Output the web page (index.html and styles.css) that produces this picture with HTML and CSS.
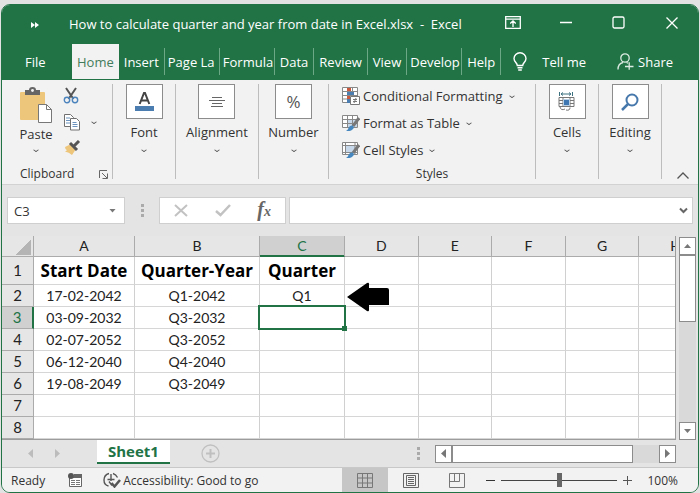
FILE: index.html
```html
<!DOCTYPE html>
<html lang="en">
<head>
    <meta charset="UTF-8">
    <title>Excel</title>
    <link rel="stylesheet" href="styles.css">
</head>
<body>
    <div class="window">
        <header class="title-bar">
            <button class="quick-access" aria-label="Quick access">
                <svg width="8" height="6" viewBox="0 0 8 6"><path d="M0 0l4 3-4 3zM4 0l4 3-4 3z" fill="#fff"/></svg>
            </button>
            <h1>How to calculate quarter and year from date in Excel.xlsx&nbsp; -&nbsp; Excel</h1>
            <div class="window-buttons">
                <button aria-label="Ribbon display options">
                    <svg width="16" height="13" viewBox="0 0 16 13" fill="none" stroke="#fff" stroke-width="1.3"><path d="M.7.7h14.6v11.6H.7zM.7 3.2h14.6M8 11V5M5.2 7.6L8 5l2.8 2.6"/></svg>
                </button>
                <button aria-label="Minimize">
                    <svg width="12" height="12" viewBox="0 0 12 12"><path d="M0 5.5h12" stroke="#fff" stroke-width="1.3"/></svg>
                </button>
                <button aria-label="Maximize">
                    <svg width="13" height="13" viewBox="0 0 13 13"><rect x="1" y="1" width="11" height="11" rx="1.5" fill="none" stroke="#fff" stroke-width="1.3"/></svg>
                </button>
                <button aria-label="Close">
                    <svg width="12" height="12" viewBox="0 0 12 12"><path d="M.5.5l11 11M11.5.5l-11 11" stroke="#fff" stroke-width="1.3"/></svg>
                </button>
            </div>
        </header>

        <nav class="tabs">
            <button class="tab tab-file">File</button>
            <button class="tab active">Home</button>
            <button class="tab">Insert</button>
            <button class="tab tab-wide">Page La</button>
            <button class="tab tab-wide">Formula</button>
            <button class="tab">Data</button>
            <button class="tab">Review</button>
            <button class="tab">View</button>
            <button class="tab tab-wide">Develop</button>
            <button class="tab">Help</button>
            <button class="tell-me">
                <svg width="14" height="19" viewBox="0 0 14 19" fill="none" stroke="#fff" stroke-width="1.4"><path d="M4.3 13.5c0-2.6-3.3-3.6-3.3-7a6 5.8 0 0 1 12 0c0 3.4-3.3 4.4-3.3 7zM4.5 15.8h5M5.2 18h3.6"/></svg>
                Tell me
            </button>
            <button class="share">
                <svg width="17" height="17" viewBox="0 0 17 17" fill="none" stroke="#dcebe2" stroke-width="1.3"><circle cx="8" cy="5" r="4.2"/><path d="M1 16.5c0-4 2-6.3 5-7M9.5 9.5l1.5.8M8 13.5h8.5M12.2 9.3v7.5"/></svg>
                Share
            </button>
        </nav>

        <section class="ribbon">
            <div class="group group-clipboard">
                <div class="clipboard-tools">
                    <button class="big-button paste">
                        <svg width="34" height="36" viewBox="0 0 34 36">
                            <rect x="1" y="5" width="25" height="28" rx="1" fill="#edc57b"/>
                            <path d="M6 8V3h4a3.5 3 0 0 1 7 0h4v5z" fill="#666"/><circle cx="13.5" cy="3.5" r="1.4" fill="#f3f3f3"/>
                            <path d="M19.500 17.500h8l5 5v13h-13z" fill="#fff" stroke="#777"/><path d="M27.500 17.500v5h5" fill="none" stroke="#777"/>
                        </svg>
                        <span>Paste</span>
                        <i class="chevron"></i>
                    </button>
                    <div class="small-tools">
                        <button aria-label="Cut">
                            <svg width="16" height="17" viewBox="0 0 16 17" fill="none"><path d="M3 1l7.500 11M13 1L5.500 12" stroke="#555" stroke-width="2"/><circle cx="4" cy="13" r="2.7" stroke="#4c84bd" stroke-width="1.4"/><circle cx="12" cy="13" r="2.7" stroke="#4c84bd" stroke-width="1.4"/></svg>
                        </button>
                        <button class="copy" aria-label="Copy">
                            <svg width="18" height="18" viewBox="0 0 18 18" fill="#fff" stroke="#707070"><path d="M1.500 1.500h6l3 3v9h-9z"/><path d="M3 5h4M3 7.500h4M3 10h4" stroke="#6b93bd"/><path d="M7.500 5.500h6l3 3v8.500h-9z"/><path d="M9.500 9.500h4M9.500 11.500h5M9.500 13.500h5" stroke="#6b93bd"/></svg>
                            <i class="chevron"></i>
                        </button>
                        <button aria-label="Format painter">
                            <svg width="18" height="15" viewBox="0 0 18 15"><path d="M2 7l6-3 5 5-4 6q-3-3-7-3.500l2-1.200q-2-1-2-3.300z" fill="#edc57b"/><path d="M7 3l7 7M10.500 6.500L16 1" stroke="#555" stroke-width="3"/></svg>
                        </button>
                    </div>
                </div>
                <div class="group-name">
                    Clipboard
                    <button aria-label="Clipboard settings">
                        <svg width="9" height="9" viewBox="0 0 9 9" fill="none" stroke="#666"><path d="M.5 8V.5H8M3 3l5 5M8.500 3.500v5h-5"/></svg>
                    </button>
                </div>
            </div>
            <div class="group">
                <button class="big-button">
                    <span class="icon-box">
                        <svg width="19" height="20" viewBox="0 0 19 20"><path d="M4.700 12L9 1h1l4.300 11M6.500 8.500h6" fill="none" stroke="#444" stroke-width="2"/><rect y="14" width="19" height="5" fill="#4c7db1"/></svg>
                    </span>
                    <span>Font</span>
                    <i class="chevron"></i>
                </button>
            </div>
            <div class="group group-alignment">
                <button class="big-button">
                    <span class="icon-box">
                        <svg width="16" height="12" viewBox="0 0 16 12" stroke="#666"><path d="M3 1.500h10M0 4.500h16M3 7.500h10M2 10.500h12"/></svg>
                    </span>
                    <span>Alignment</span>
                    <i class="chevron"></i>
                </button>
            </div>
            <div class="group group-number">
                <button class="big-button">
                    <span class="icon-box percent">%</span>
                    <span>Number</span>
                    <i class="chevron"></i>
                </button>
            </div>
            <div class="group group-styles">
                <div class="style-list">
                    <button>
                        <svg width="18" height="18" viewBox="0 0 18 18"><path d="M.5.5h15v15H.5zM.5 4.500h15M.5 8.500h15M.5 12h15M5.500.5v15M10.500.5v15" fill="#fff" stroke="#888"/><path d="M5 1h4v3H5zM5 9h3v3H5z" fill="#c9573b"/><path d="M5 5h7v3H5zM5 12h4v4H5z" fill="#4c7db1"/><path d="M8.500 9.500h9v8h-9z" fill="#fff" stroke="#777"/><path d="M11 12.500h4M11 14.500h4M14 11l-2 5" stroke="#777"/></svg>
                        Conditional Formatting <i class="chevron"></i>
                    </button>
                    <button>
                        <svg width="18" height="18" viewBox="0 0 18 18"><path d="M.5 1.500h15v12H.5z" fill="#fff" stroke="#888"/><path d="M5 5h10v8H5z" fill="#c6d8e9"/><path d="M.5 5.500h15M.5 9.500h15M5.500 1.500v12M10.500 1.500v12" stroke="#888"/><path d="M17 4l-6 8" stroke="#777" stroke-width="3"/><path d="M4 17q2-1 2.500-3 1-3 4-2.500 2 1 1 3-2 3-7.500 2.500z" fill="#4587be"/></svg>
                        Format as Table <i class="chevron"></i>
                    </button>
                    <button>
                        <svg width="18" height="18" viewBox="0 0 18 18"><path d="M.5 1.500h15v12H.5z" fill="#fff" stroke="#888"/><path d="M3 5h10v6H3z" fill="#c6d8e9"/><path d="M.5 4.500h15M.5 11.500h15M3.500 1.500v12M13 1.500v12" stroke="#888"/><path d="M17 4l-6 8" stroke="#777" stroke-width="3"/><path d="M4 17q2-1 2.500-3 1-3 4-2.500 2 1 1 3-2 3-7.500 2.500z" fill="#4587be"/></svg>
                        Cell Styles <i class="chevron"></i>
                    </button>
                </div>
                <div class="group-name">Styles</div>
            </div>
            <div class="group">
                <button class="big-button">
                    <span class="icon-box">
                        <svg width="18" height="20" viewBox="0 0 18 20" fill="none" stroke="#777"><path d="M1 5.500h15v9H1zM1 8.500h15M1 11.500h15M5 5v10M12 5v10M2 15q1 4 5 2M8 18q4 1 4-2.500"/><path d="M5.500 7.500h6v6h-6z" fill="#3f77b3" stroke="#b9cfe4"/><path d="M1.500 0v4M14.500 0v4M3 2h10M5 .5L3 2l2 1.500M11 .5L13 2l-2 1.500" stroke="#3c7180"/></svg>
                    </span>
                    <span>Cells</span>
                    <i class="chevron"></i>
                </button>
            </div>
            <div class="group">
                <button class="big-button">
                    <span class="icon-box">
                        <svg width="18" height="18" viewBox="0 0 18 18" fill="none" stroke="#4778ac" stroke-width="2"><circle cx="11" cy="7" r="5.5"/><path d="M7 11l-6 6" stroke-width="2.5"/></svg>
                    </span>
                    <span>Editing</span>
                    <i class="chevron"></i>
                </button>
            </div>
            <button class="collapse" aria-label="Collapse ribbon">
                <svg width="12" height="7" viewBox="0 0 12 7"><path d="M.5 6.500L6 1l5.500 5.500" fill="none" stroke="#555" stroke-width="1.3"/></svg>
            </button>
        </section>

        <section class="formula-bar">
            <div class="name-box">
                <input type="text" value="C3" aria-label="Name box">
                <button aria-label="Choose name"><i class="triangle down"></i></button>
            </div>
            <i class="dots"></i>
            <div class="formula-buttons">
                <button aria-label="Cancel"><svg width="14" height="13" viewBox="0 0 14 13"><path d="M1 1l12 11M13 1L1 12" stroke="#c2c2c2" stroke-width="2"/></svg></button>
                <button aria-label="Enter"><svg width="16" height="13" viewBox="0 0 16 13"><path d="M1 7l4.500 4L15 1" fill="none" stroke="#c2c2c2" stroke-width="2.5"/></svg></button>
                <button class="fx" aria-label="Insert function">f<small>x</small></button>
            </div>
            <div class="formula-input">
                <input type="text" aria-label="Formula">
                <button aria-label="Expand formula bar"><svg width="9" height="7" viewBox="0 0 9 7"><path d="M1 1.500l3.500 3.500L8 1.500" fill="none" stroke="#666" stroke-width="2"/></svg></button>
            </div>
        </section>

        <main class="sheet">
            <div class="grid">
                <table>
                    <colgroup>
                        <col class="col-head"><col class="col-a"><col class="col-b"><col class="col-c">
                        <col><col><col><col><col>
                    </colgroup>
                    <thead>
                        <tr>
                            <th class="corner"></th>
                            <th>A</th><th>B</th><th class="selected">C</th><th>D</th><th>E</th><th>F</th><th>G</th><th>H</th>
                        </tr>
                    </thead>
                    <tbody>
                        <tr class="heading-row"><th>1</th><td>Start Date</td><td>Quarter-Year</td><td>Quarter</td><td></td><td></td><td></td><td></td><td></td></tr>
                        <tr>
                            <th>2</th><td>17-02-2042</td><td>Q1-2042</td><td>Q1</td>
                            <td class="pointer-cell">
                                <svg class="pointer" width="43" height="30" viewBox="0 0 43 30"><path d="M0 15L20 1q2-1 2 1v4h18q2 0 2 2v15H22v5q0 2-2 1z"/></svg>
                            </td>
                            <td></td><td></td><td></td><td></td>
                        </tr>
                        <tr><th class="selected">3</th><td>03-09-2032</td><td>Q3-2032</td><td class="current"></td><td></td><td></td><td></td><td></td><td></td></tr>
                        <tr><th>4</th><td>02-07-2052</td><td>Q3-2052</td><td></td><td></td><td></td><td></td><td></td><td></td></tr>
                        <tr><th>5</th><td>06-12-2040</td><td>Q4-2040</td><td></td><td></td><td></td><td></td><td></td><td></td></tr>
                        <tr><th>6</th><td>19-08-2049</td><td>Q3-2049</td><td></td><td></td><td></td><td></td><td></td><td></td></tr>
                        <tr><th>7</th><td></td><td></td><td></td><td></td><td></td><td></td><td></td><td></td></tr>
                        <tr><th>8</th><td></td><td></td><td></td><td></td><td></td><td></td><td></td><td></td></tr>
                    </tbody>
                </table>
            </div>
            <div class="scroll-vertical">
                <button aria-label="Scroll up"><i class="triangle up"></i></button>
                <div class="thumb"></div>
                <button class="last" aria-label="Scroll down"><i class="triangle down"></i></button>
            </div>
        </main>

        <div class="sheet-bar">
            <button class="sheet-arrow" aria-label="Previous sheet"><i class="triangle left"></i></button>
            <button class="sheet-arrow" aria-label="Next sheet"><i class="triangle right"></i></button>
            <button class="sheet-tab">Sheet1</button>
            <button class="add-sheet" aria-label="New sheet">
                <svg width="19" height="19" viewBox="0 0 19 19" fill="none" stroke="#c0c0c0" stroke-width="1.3"><circle cx="9.5" cy="9.5" r="8.5"/><path d="M9.500 5v9M5 9.500h9" stroke-width="2"/></svg>
            </button>
            <i class="dots"></i>
            <div class="scroll-horizontal">
                <button aria-label="Scroll left"><i class="triangle left"></i></button>
                <div class="thumb"></div>
                <button class="last" aria-label="Scroll right"><i class="triangle right"></i></button>
            </div>
        </div>

        <footer class="status-bar">
            <span class="ready">Ready</span>
            <svg class="macro" width="15" height="15" viewBox="0 0 15 15"><path d="M1.500 4.500h12v9h-12z" fill="#fff" stroke="#666"/><path d="M6 1h8v4H6z" fill="#666"/><circle cx="3" cy="3" r="3" fill="#555"/><path d="M3 7.500h4M8 7.500h4M3 9.500h4M8 9.500h4M3 11.500h4M8 11.500h4" stroke="#777"/></svg>
            <button class="accessibility">
                <svg width="18" height="16" viewBox="0 0 18 16" fill="none" stroke="#555" stroke-width="1.4"><path d="M6 1.500Q1 3 1 8t4.500 6M10 1.500q3 1 4.500 4"/><path d="M8 2v7M4.500 7.500h7M6 9.500l3 4"/><path d="M8.500 11l3 3.500L17 8" stroke-width="2.5"/></svg>
                Accessibility: Good to go
            </button>
            <div class="views">
                <button class="active" aria-label="Normal"><svg width="16" height="15" viewBox="0 0 16 15"><path d="M.5.5h15v14H.5zM.5 5h15M.5 10h15M5.500.5v14M10.500.5v14" fill="none" stroke="#777"/></svg></button>
                <button aria-label="Page layout"><svg width="16" height="15" viewBox="0 0 16 15" fill="none" stroke="#666"><path d="M.5.5h15v14H.5zM3.500 2.500h9v10h-9zM5 4.500h6M5 6.500h6M5 8.500h6M5 10.500h6"/></svg></button>
                <button aria-label="Page break preview"><svg width="16" height="15" viewBox="0 0 16 15" fill="none" stroke="#777"><path d="M.5.5h15v14H.5zM5.500.5v8M10.500.5v8M.5 8.500h10"/></svg></button>
            </div>
            <div class="zoom">
                <button aria-label="Zoom out"><svg width="9" height="9" viewBox="0 0 9 9"><path d="M0 4.500h9" stroke="#333"/></svg></button>
                <input type="range" min="0" max="100" value="50" aria-label="Zoom">
                <button aria-label="Zoom in"><svg width="9" height="9" viewBox="0 0 9 9"><path d="M0 4.500h9M4.500 0v9" stroke="#555"/></svg></button>
                <span>100%</span>
            </div>
        </footer>
    </div>
</body>
</html>
```
FILE: styles.css
```css
* {
    box-sizing: border-box;
}

body {
    margin: 0;
    padding: 4px 1px 0;
    background-color: #e2e2e2;
    font-family: "Open Sans", "Noto Sans", sans-serif;
    font-size: 13px;
    color: #333;
}

button,
input {
    margin: 0;
    padding: 0;
    border: none;
    background: none;
    font: inherit;
    color: inherit;
}

svg {
    display: block;
    flex-shrink: 0;
}

.window {
    border: 1px solid #217346;
    border-radius: 9px;
    overflow: hidden;
    background-color: #e4e4e4;
}

/* Title bar */
.title-bar {
    display: flex;
    align-items: center;
    height: 39px;
    background-color: #217346;
    color: #fff;
}

.quick-access {
    width: 67px;
    padding-left: 29px;
}

.title-bar h1 {
    flex: 1;
    margin: 0;
    font-size: 13px;
    font-weight: normal;
    line-height: 39px;
    white-space: nowrap;
}

.window-buttons {
    display: flex;
    padding-bottom: 4px;
}

.window-buttons button {
    display: flex;
    align-items: center;
    justify-content: center;
    width: 53px;
    height: 30px;
}

/* Tabs */
.tabs {
    display: flex;
    align-items: center;
    height: 35px;
    background-color: #217346;
    color: #fff;
}

.tab {
    flex-shrink: 0;
    height: 27px;
    padding: 0 5px;
    border-right: 1px solid #6ca786;
    white-space: nowrap;
    text-align: left;
}

.tab-file {
    width: 70px;
    padding-left: 23px;
    border: none;
}

.tab-wide {
    width: 55px;
    padding: 0 3px;
}

.tab.active {
    height: 35px;
    border: none;
    background-color: #f2f2f2;
    color: #437c5c;
}

.tell-me,
.share {
    display: flex;
    align-items: center;
    gap: 15px;
    margin-left: 12px;
}

.share {
    gap: 4px;
    margin: 0 25px 0 auto;
}

/* Ribbon */
.ribbon {
    display: flex;
    height: 106px;
    padding: 4px 0 5px;
    border-top: 1px solid #217346;
    border-bottom: 1px solid #d2d2d2;
    background-color: #f2f2f2;
}

.group {
    display: flex;
    flex-direction: column;
    align-items: center;
    width: 63px;
    border-right: 1px solid #bdbdbd;
}

.group-clipboard {
    width: 111px;
}

.group-alignment {
    width: 83px;
}

.group-number {
    width: 70px;
}

.group-styles {
    flex: 1;
    justify-content: space-between;
}

.big-button {
    display: flex;
    flex-direction: column;
    align-items: center;
    line-height: 27px;
}

.big-button .chevron {
    margin-top: 2px;
}

.paste {
    line-height: 23px;
}

.icon-box {
    display: flex;
    align-items: center;
    justify-content: center;
    width: 37px;
    height: 35px;
    border: 1px solid #8c8c8c;
    background-color: #fff;
}

.percent {
    font-size: 17px;
    color: #555;
}

.chevron {
    display: inline-block;
    width: 4px;
    height: 4px;
    border: solid #555;
    border-width: 0 1px 1px 0;
    transform: scaleY(0.7) rotate(45deg);
}

.clipboard-tools {
    display: flex;
    flex: 1;
    align-items: flex-start;
    width: 100%;
    padding: 3px 0 0 17px;
    gap: 10px;
}

.small-tools {
    display: flex;
    flex-direction: column;
    gap: 9px;
    align-items: flex-start;
}

.copy {
    display: flex;
    align-items: center;
    gap: 11px;
}

.group-name {
    display: flex;
    align-items: center;
    justify-content: center;
    font-size: 12px;
    line-height: 10px;
}

.group-clipboard .group-name {
    width: 100%;
    justify-content: space-between;
    padding: 0 4px 0 18px;
}

.style-list {
    width: 100%;
    margin-top: -2px;
    padding-left: 13px;
}

.style-list button {
    display: flex;
    align-items: center;
    gap: 3px;
    height: 27px;
    white-space: nowrap;
}

.style-list .chevron {
    margin-left: 4px;
}

.collapse {
    display: flex;
    align-items: flex-end;
    justify-content: center;
    width: 36px;
    padding-left: 6px;
}

/* Formula bar */
.formula-bar {
    display: flex;
    align-items: center;
    height: 51px;
    padding: 0 5px;
}

.name-box,
.formula-buttons,
.formula-input {
    display: flex;
    align-items: center;
    height: 27px;
    border: 1px solid #cfcfcf;
    background-color: #fff;
}

.name-box {
    width: 118px;
    padding: 0 8px 0 6px;
}

.name-box input {
    width: 90px;
    flex: 1;
}

.dots {
    width: 3px;
    height: 13px;
    margin: 0 15px 0 16px;
    background: repeating-linear-gradient(#aaa 0 3px, transparent 3px 5px);
}

.formula-buttons {
    width: 127px;
    justify-content: space-between;
    padding: 0 14px;
}

.fx {
    font-family: "Liberation Serif", serif;
    font-size: 20px;
    font-style: italic;
    font-weight: bold;
    line-height: 22px;
    color: #666;
}

.fx small {
    font-size: 14px;
}

.formula-input {
    flex: 1;
    margin-left: 3px;
    padding-right: 4px;
}

.formula-input input {
    flex: 1;
}

.triangle {
    display: block;
    width: 7px;
    height: 4px;
    background-color: #777;
}

.triangle.down {
    clip-path: polygon(0 0, 100% 0, 50% 100%);
}

.triangle.up {
    clip-path: polygon(0 100%, 100% 100%, 50% 0);
}

.triangle.left,
.triangle.right {
    width: 5px;
    height: 9px;
}

.triangle.left {
    clip-path: polygon(100% 0, 100% 100%, 0 50%);
}

.triangle.right {
    clip-path: polygon(0 0, 0 100%, 100% 50%);
}

/* Sheet */
.sheet {
    display: flex;
    gap: 3px;
    padding-right: 2px;
}

.grid {
    flex: 1;
    min-width: 0;
    overflow: hidden;
    border-right: 1px solid #9c9c9c;
    border-bottom: 1px solid #9c9c9c;
}

table {
    width: 711px;
    table-layout: fixed;
    border-collapse: separate;
    border-spacing: 0;
    font-family: Lato, "Open Sans", sans-serif;
    font-size: 14px;
    color: #222;
}

.col-head {
    width: 32px;
}

.col-a {
    width: 101px;
}

.col-b {
    width: 125px;
}

.col-c {
    width: 85px;
}

th,
td {
    height: 22px;
    padding: 0;
    border-right: 1px solid #d0d0d0;
    border-bottom: 1px solid #d6d6d6;
    line-height: 21px;
    text-align: center;
    white-space: nowrap;
}

td {
    background-color: #fff;
}

th {
    border-color: #ababab;
    background-color: #e6e6e6;
    font-size: 15px;
    font-weight: normal;
}

th.selected {
    background-color: #d0d0d0;
    color: #217346;
}

thead th {
    height: 21px;
    font-size: 14px;
    line-height: 20px;
}

thead th.selected {
    border-bottom-color: #217346;
    box-shadow: inset 0 -1px #217346;
}

tbody th.selected {
    border-right: 2px solid #217346;
}

.corner {
    background: linear-gradient(135deg, #e6e6e6 50%, #b4b4b4 50%) 14px 4px / 15px 15px no-repeat #e6e6e6;
}

.heading-row th,
.heading-row td {
    height: 28px;
    line-height: 27px;
}

.heading-row td {
    font-family: "Open Sans", sans-serif;
    font-size: 17px;
    font-weight: bold;
    color: #000;
}

.pointer-cell,
.current {
    position: relative;
}

.pointer {
    position: absolute;
    top: -3px;
    left: 2px;
    z-index: 1;
}

.current::before {
    content: "";
    position: absolute;
    inset: -2px;
    border: 2px solid #217346;
}

.current::after {
    content: "";
    position: absolute;
    right: -3px;
    bottom: -3px;
    width: 5px;
    height: 5px;
    background-color: #217346;
}

/* Scroll bars */
.scroll-vertical {
    display: flex;
    flex-direction: column;
    width: 17px;
    margin-top: 1px;
    background-color: #d9d9d9;
}

.scroll-vertical button,
.scroll-horizontal button {
    display: flex;
    align-items: center;
    justify-content: center;
    width: 17px;
    height: 18px;
    border: 1px solid #8c8c8c;
    background-color: #fff;
}

.thumb {
    border: 1px solid #8c8c8c;
    background-color: #fff;
}

.scroll-vertical .thumb {
    height: 67px;
}

.scroll-vertical .last {
    margin-top: auto;
}

.scroll-horizontal {
    display: flex;
    flex-basis: 241px;
    height: 18px;
    margin-right: 22px;
    background-color: #d9d9d9;
}

.scroll-horizontal .thumb {
    width: 181px;
}

.scroll-horizontal .last {
    margin-left: auto;
}

/* Sheet tabs */
.sheet-bar {
    display: flex;
    align-items: center;
    height: 27px;
    padding-left: 26px;
}

.sheet-arrow {
    width: 5px;
    margin-right: 22px;
}

.sheet-arrow .triangle {
    background-color: #bcbcbc;
}

.sheet-tab {
    align-self: flex-start;
    height: 24px;
    margin-left: 15px;
    padding: 0 11px;
    border-bottom: 2px solid #217346;
    background-color: #fff;
    color: #217346;
    font-size: 15px;
    font-weight: bold;
    line-height: 20px;
}

.add-sheet {
    margin: 0 auto 0 31px;
}

/* Status bar */
.status-bar {
    display: flex;
    align-items: center;
    height: 25px;
    border-top: 1px solid #c8c8c8;
    background-color: #f2f2f2;
    font-size: 12px;
}

.ready {
    margin-left: 9px;
}

.macro {
    margin: 0 20px 0 23px;
}

.accessibility {
    display: flex;
    align-items: center;
    gap: 2px;
    white-space: nowrap;
}

.views {
    display: flex;
    align-self: stretch;
    margin-left: auto;
}

.views button {
    display: flex;
    align-items: center;
    justify-content: center;
    width: 46px;
}

.views .active {
    background-color: #c6c6c6;
}

.zoom {
    display: flex;
    align-items: center;
    gap: 6px;
    margin: 0 20px 0 6px;
}

.zoom span {
    margin-left: 9px;
}

.zoom input {
    appearance: none;
    width: 116px;
    height: 14px;
    background: linear-gradient(#444, #444) center / 100% 1px no-repeat;
}

.zoom input::-webkit-slider-thumb {
    appearance: none;
    width: 5px;
    height: 14px;
    background-color: #666;
}
```
